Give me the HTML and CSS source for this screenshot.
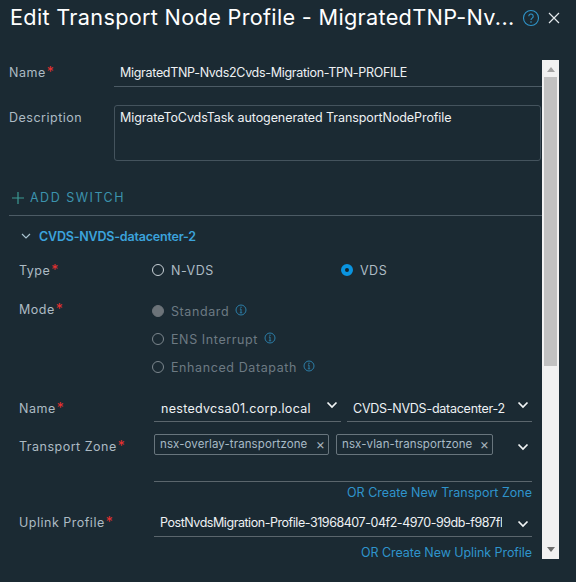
FILE: index.html
```html
<!DOCTYPE html>
<html lang="en">
<head>
	<meta charset="UTF-8">
	<title>Edit Transport Node Profile</title>
	<link rel="stylesheet" href="styles.css">
</head>
<body>
	<div class="modal">
		<div class="modal_head">
			<h1 class="modal_title">Edit Transport Node Profile - MigratedTNP-Nv...</h1>
			<svg class="help" width="18" height="18" viewBox="0 0 18 18"><circle cx="9" cy="9" r="7.5" fill="none" stroke="#2f94c9" stroke-width="1.1"/><path d="M6.8 7.2a2.2 2.2 0 1 1 3.4 1.9c-.8.5-1.2.9-1.2 1.9" fill="none" stroke="#2f94c9" stroke-width="1.1"/><circle cx="9" cy="13" r=".8" fill="#2f94c9"/></svg>
			<svg class="close" width="12" height="12" viewBox="0 0 12 12"><path d="M1 1l10 10M11 1L1 11" stroke="#e4e9ec" stroke-width="1.2"/></svg>
		</div>
		<div class="modal_body">
			<div class="form">
				<div class="row row_name">
					<label class="label">Name<span class="req">*</span></label>
					<div class="input">MigratedTNP-Nvds2Cvds-Migration-TPN-PROFILE</div>
				</div>
				<div class="row row_desc">
					<label class="label">Description</label>
					<div class="textarea">MigrateToCvdsTask autogenerated TransportNodeProfile</div>
				</div>
				<div class="add_switch">
					<svg width="14" height="14" viewBox="0 0 14 14"><path d="M7 1v12M1 7h12" stroke="#3c9a93" stroke-width="1.2"/></svg>
					<span>ADD SWITCH</span>
				</div>
				<div class="section_head">
					<svg width="10" height="7" viewBox="0 0 10 7"><path d="M1 1l4 4 4-4" fill="none" stroke="#a9c3d0" stroke-width="1.2"/></svg>
					<span>CVDS-NVDS-datacenter-2</span>
				</div>
				<div class="section">
					<div class="row row_type">
						<label class="label">Type<span class="req">*</span></label>
						<div class="radio_item radio_nvds"><i class="radio"></i>N-VDS</div>
						<div class="radio_item"><i class="radio radio_on"></i>VDS</div>
					</div>
					<div class="row row_mode">
						<label class="label">Mode<span class="req">*</span></label>
						<div class="mode_list">
							<div class="radio_item muted"><i class="radio radio_fill"></i>Standard<svg class="info" width="12" height="12" viewBox="0 0 12 12"><use href="#info"/></svg></div>
							<div class="radio_item muted"><i class="radio radio_dim"></i>ENS Interrupt<svg class="info" width="12" height="12" viewBox="0 0 12 12"><use href="#info"/></svg></div>
							<div class="radio_item muted"><i class="radio radio_dim"></i>Enhanced Datapath<svg class="info" width="12" height="12" viewBox="0 0 12 12"><use href="#info"/></svg></div>
						</div>
					</div>
					<div class="row row_vc">
						<label class="label">Name<span class="req">*</span></label>
						<div class="select select_vc"><span>nestedvcsa01.corp.local</span><svg class="chev" width="12" height="8" viewBox="0 0 12 8"><use href="#chev"/></svg></div>
						<div class="select select_sw"><span>CVDS-NVDS-datacenter-2</span><svg class="chev" width="12" height="8" viewBox="0 0 12 8"><use href="#chev"/></svg></div>
					</div>
					<div class="row row_tz">
						<label class="label">Transport Zone<span class="req">*</span></label>
						<div class="tz_box">
							<span class="chip chip_overlay">nsx-overlay-transportzone<b class="chip_x">×</b></span>
							<span class="chip chip_vlan">nsx-vlan-transportzone<b class="chip_x">×</b></span>
							<svg class="chev tz_chev" width="12" height="8" viewBox="0 0 12 8"><use href="#chev"/></svg>
						</div>
					</div>
					<a class="link">OR Create New Transport Zone</a>
					<div class="row row_uplink">
						<label class="label">Uplink Profile<span class="req">*</span></label>
						<div class="select select_up"><span>PostNvdsMigration-Profile-31968407-04f2-4970-99db-f987fl</span><svg class="chev" width="12" height="8" viewBox="0 0 12 8"><use href="#chev"/></svg></div>
					</div>
					<a class="link link_uplink">OR Create New Uplink Profile</a>
				</div>
			</div>
			<div class="scrollbar">
				<i class="arrow_up"></i>
				<div class="thumb_track"><div class="thumb"></div></div>
				<i class="arrow_down"></i>
			</div>
		</div>
	</div>
	<svg class="defs" width="0" height="0">
		<symbol id="chev" viewBox="0 0 12 8"><path d="M1.5 1.5l4.5 4.5 4.5-4.5" fill="none" stroke="#f2f5f6" stroke-width="1.7"/></symbol>
		<symbol id="info" viewBox="0 0 12 12"><circle cx="6" cy="6" r="5" fill="none" stroke="#2c7ea8" stroke-width="1"/><path d="M6 5v3.6M4.8 8.8h2.4M4.9 5h1.1" fill="none" stroke="#2c7ea8" stroke-width="1"/><circle cx="6" cy="3.3" r=".7" fill="#2c7ea8"/></symbol>
	</svg>
</body>
</html>
```

FILE: styles.css
```css
*{
	margin: 0;
	padding: 0;
	box-sizing: border-box;
}
html,body{
	height: 100%;
	overflow: hidden;
}
body{
	background-color: #1b2a33;
	font-family: Inter, "Noto Sans", "Liberation Sans", sans-serif;
	font-size: 12.5px;
	color: #adbbc4;
}
.defs{
	position: absolute;
}
.modal_head{
	display: flex;
	align-items: center;
	height: 60px;
	padding: 0 0 26px 10px;
}
.modal_title{
	font-size: 21.7px;
	font-weight: 400;
	color: #fff;
	white-space: nowrap;
	width: 512px;
	letter-spacing: 0.3px;
	line-height: 34px;
}
.help{
	margin-top: 2px;
}
.close{
	margin: 1px 0 0 8px;
}
.modal_body{
	display: flex;
	height: 499px;
	padding-left: 9px;
}
.form{
	width: 533px;
	overflow: hidden;
}
.row{
	display: flex;
}
.label{
	display: block;
	letter-spacing: 0.5px;
	color: #adbbc4;
}
.req{
	color: #e8302f;
	font-size: 14px;
	line-height: 12px;
	margin-left: 1px;
}
.row_name{
	height: 27px;
	align-items: center;
}
.row_name .label{
	padding-bottom: 2px;
}
.row_name .label,.row_desc .label{
	width: 105px;
}
.input{
	flex: 1;
	height: 27px;
	line-height: 26px;
	padding-left: 6px;
	color: #eef1f3;
	border-bottom: 1px solid #4c5b65;
	white-space: nowrap;
	letter-spacing: -0.3px;
}
.row_desc{
	margin-top: 18px;
	height: 56px;
}
.row_desc .label{
	padding-top: 5px;
}
.textarea{
	flex: 1;
	margin-right: 1px;
	border: 1px solid #44535d;
	border-radius: 3px;
	padding: 4px 5px;
	color: #eef1f3;
	letter-spacing: -0.08px;
}
.add_switch{
	display: flex;
	align-items: center;
	height: 55px;
	padding: 19px 0 0 2px;
	border-bottom: 1px solid #4c5b65;
	color: #3c93ad;
	letter-spacing: 1.5px;
}
.add_switch span{
	margin-left: 5px;
}
.section_head{
	display: flex;
	align-items: center;
	height: 41px;
	padding-left: 12px;
	font-weight: 600;
	letter-spacing: -0.2px;
	color: #3ba3dc;
}
.section_head span{
	margin-left: 8px;
}
.section{
	padding: 0 10px;
}
.radio_item{
	display: flex;
	align-items: center;
	white-space: nowrap;
	letter-spacing: 0.5px;
}
.radio{
	width: 12px;
	height: 12px;
	border: 1px solid #c7d0d6;
	border-radius: 50%;
	margin-right: 7px;
}
.radio_on{
	border: 4px solid #0a94e0;
	background-color: #14242c;
}
.radio_fill{
	background-color: #6c7379;
	border-color: #6c7379;
}
.radio_dim{
	border-color: #7b868d;
}
.muted{
	letter-spacing: 0.6px;
	color: #6d7a83;
}
.info{
	margin-left: 6px;
	margin-top: -3px;
}
.row_type{
	height: 26px;
	align-items: center;
}
.row_type .label,.row_mode .label{
	width: 133px;
	flex: none;
}
.row_vc .label,.row_tz .label,.row_uplink .label{
	width: 135px;
	flex: none;
}
.radio_nvds{
	width: 189px;
}
.row_mode{
	margin-top: 14px;
	height: 84px;
}
.row_mode .label{
	line-height: 26px;
}
.mode_list{
	display: flex;
	flex-direction: column;
}
.mode_list .radio_item{
	height: 28px;
}
.row_vc{
	margin-top: 14px;
	height: 27px;
	align-items: center;
}
.select{
	display: flex;
	align-items: center;
	justify-content: space-between;
	height: 27px;
	border-bottom: 1px solid #5b666d;
	color: #eef1f3;
	padding: 0 3px 0 6px;
	white-space: nowrap;
}
.select span{
	overflow: hidden;
}
.select .chev{
	flex: none;
	margin-left: 4px;
	margin-top: -7px;
}
.select_vc{
	width: 187px;
	margin-right: 6px;
	padding-left: 7px;
	letter-spacing: 0.3px;
}
.select_sw{
	width: 185px;
	letter-spacing: -0.25px;
}
.row_tz{
	margin-top: 12px;
}
.row_tz .label{
	padding-top: 5px;
}
.tz_box{
	display: flex;
	align-items: flex-start;
	width: 378px;
	height: 48px;
	border-bottom: 1px solid #5b666d;
}
.chip{
	display: flex;
	align-items: center;
	justify-content: space-between;
	height: 21px;
	padding: 0 3px 2px 5px;
	border: 1px solid #68757d;
	border-radius: 2px;
	font-size: 11.5px;
	letter-spacing: 0.1px;
	color: #a8bac6;
	white-space: nowrap;
}
.chip_overlay{
	width: 175px;
	margin-right: 7px;
}
.chip_vlan{
	width: 157px;
}
.chip_x{
	font-weight: 400;
	font-size: 14px;
	color: #a8b3ba;
}
.tz_chev{
	flex: none;
	margin: 9px 0 0 24px;
}
.link{
	display: block;
	text-align: right;
	height: 20px;
	line-height: 22px;
	color: #2f94cc;
}
.row_uplink{
	margin-top: 1px;
	height: 34px;
	align-items: flex-end;
}
.row_uplink .label{
	padding-bottom: 7px;
}
.select_up{
	width: 378px;
	height: 34px;
	padding-top: 6px;
	letter-spacing: -0.45px;
}
.select_up .chev{
	margin-top: 3px;
}
.link_uplink{
	margin-top: 8px;
	height: 16px;
	line-height: 16px;
	letter-spacing: -0.07px;
}
.scrollbar{
	display: flex;
	flex-direction: column;
	width: 17px;
	height: 499px;
	background-color: #f1f1f1;
	align-items: center;
}
.arrow_up,.arrow_down{
	width: 0;
	height: 0;
	border-left: 4px solid transparent;
	border-right: 4px solid transparent;
	flex: none;
}
.arrow_up{
	border-bottom: 5px solid #a3a3a3;
	margin: 7px 0 5px;
}
.arrow_down{
	border-top: 5px solid #6e6e6e;
	margin: 5px 0 7px;
}
.thumb_track{
	flex: 1;
	width: 13px;
}
.thumb{
	height: 289px;
	background-color: #c1c1c1;
}
```
